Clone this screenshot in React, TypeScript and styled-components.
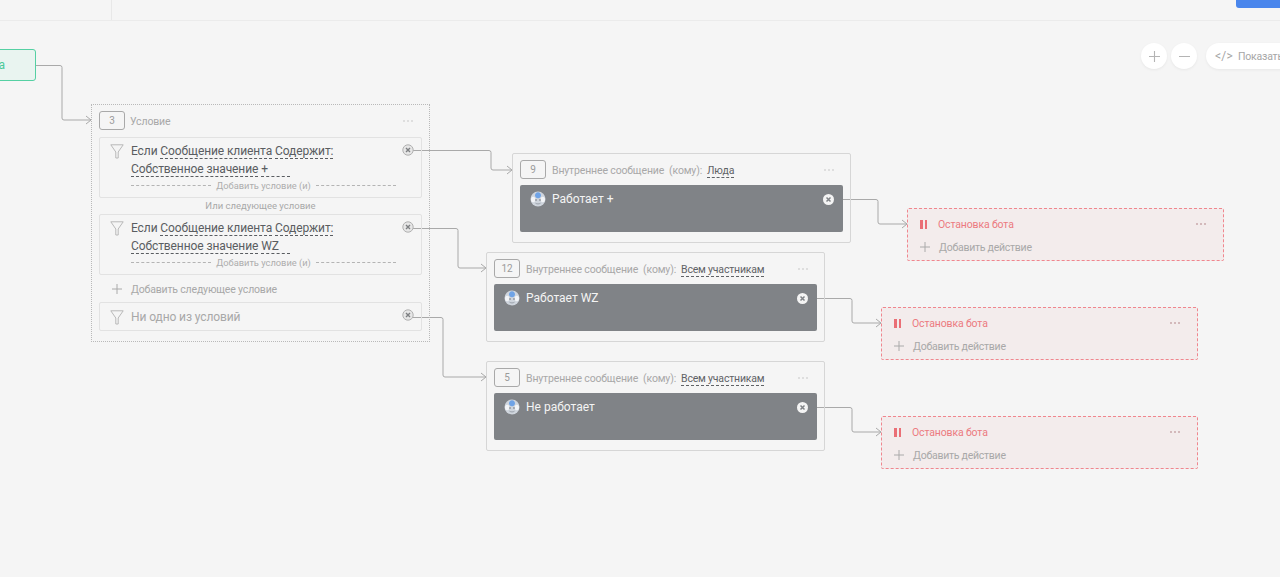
import React from "react";
import styled, { createGlobalStyle } from "styled-components";

const GlobalStyle = createGlobalStyle`
  html, body {
    margin: 0;
    padding: 0;
    height: 100%;
    background: #f5f5f5;
    overflow: hidden;
  }
  body {
    font-family: Roboto, "Liberation Sans", sans-serif;
  }
`;

const Page = styled.div`
  width: 1280px;
  height: 577px;
  display: flex;
  flex-direction: column;
  background: #f5f5f5;
  overflow: hidden;
`;

const TopBar = styled.header`
  flex: none;
  height: 20px;
  display: flex;
  justify-content: space-between;
  align-items: flex-start;
  border-bottom: 1px solid #ebebeb;
`;

const TopSection = styled.div`
  width: 111px;
  height: 20px;
  border-right: 1px solid #e8e8e8;
`;

const PrimaryButton = styled.div`
  width: 44px;
  height: 8px;
  background: #4a86ec;
  border-radius: 0 0 0 3px;
`;

const Canvas = styled.main`
  position: relative;
  flex: 1;
`;

const Wires = styled.svg`
  position: absolute;
  left: 0;
  top: -21px;
  width: 1280px;
  height: 577px;
  pointer-events: none;
`;

const ZoomControls = styled.div`
  position: absolute;
  left: 1141px;
  top: 22px;
  display: flex;
  align-items: center;
  gap: 4px;
`;

const RoundButton = styled.div`
  width: 26px;
  height: 26px;
  border-radius: 50%;
  background: #fff;
  box-shadow: 0 1px 3px rgba(0, 0, 0, 0.06);
  display: flex;
  align-items: center;
  justify-content: center;
  color: #b4b4b4;
`;

const CodePill = styled.div`
  margin-left: 5px;
  width: 100px;
  height: 26px;
  border-radius: 13px;
  background: #fff;
  box-shadow: 0 1px 3px rgba(0, 0, 0, 0.06);
  display: flex;
  align-items: center;
  gap: 5px;
  padding-left: 9px;
  font-size: 10.5px;
  letter-spacing: -0.2px;
  color: #a6a6a6;
  white-space: nowrap;
`;

const CodeGlyph = styled.span`
  font-size: 12px;
  letter-spacing: 0.2px;
`;

const Node = styled.section<{ $x: number; $y: number; $w: number; $h: number }>`
  position: absolute;
  left: ${(p) => p.$x}px;
  top: ${(p) => p.$y - 21}px;
  width: ${(p) => p.$w}px;
  height: ${(p) => p.$h}px;
  box-sizing: border-box;
`;

const StartNode = styled(Node)`
  border: 1px solid #55d0a3;
  border-radius: 3px;
  background: #e9f4f0;
  color: #4cc99a;
  font-size: 12px;
  display: flex;
  align-items: center;
  justify-content: flex-end;
  padding-right: 30px;
`;

const ConditionNode = styled(Node)`
  border: 1px dotted #b9b9b9;
  padding: 6px 7px;
  display: flex;
  flex-direction: column;
`;

const MessageNode = styled(Node)`
  border: 1px solid #d6d6d6;
  border-radius: 2px;
  padding: 6px 7px;
  display: flex;
  flex-direction: column;
`;

const StopNode = styled(Node)`
  border: 1px dashed #f0868e;
  border-radius: 2px;
  background: #f3ecec;
  padding: 8px 14px 0 12px;
  display: flex;
  flex-direction: column;
  gap: 9px;
`;

const NodeHead = styled.div`
  height: 19px;
  flex: none;
  display: flex;
  align-items: center;
  font-size: 10.5px;
  letter-spacing: -0.15px;
  color: #a8a8a8;
  white-space: nowrap;
`;

const HeadLabel = styled.span`
  margin-top: 2px;
`;

const Badge = styled.div<{ $gap?: number }>`
  box-sizing: border-box;
  flex: none;
  width: 26px;
  height: 19px;
  margin-right: ${(p) => p.$gap ?? 5}px;
  border: 1px solid #a9a9a9;
  border-radius: 3px;
  display: flex;
  align-items: center;
  justify-content: center;
  font-size: 10px;
  color: #9b9b9b;
`;

const Recipient = styled.span`
  margin-left: 5px;
  margin-top: 2px;
  color: #5f6266;
  letter-spacing: -0.2px;
  border-bottom: 1px dashed #5f6266;
  line-height: 13px;
`;

const MoreDots = styled.span<{ $color?: string; $inset?: number }>`
  margin-left: auto;
  margin-right: ${(p) => p.$inset ?? 9}px;
  display: flex;
  gap: 2px;
  i {
    width: 2px;
    height: 2px;
    border-radius: 50%;
    background: ${(p) => p.$color ?? "#d6d6d6"};
  }
`;

const HeadGap = styled.div`
  height: 7px;
  flex: none;
`;

const CaseCard = styled.div<{ $h: number; $top?: number }>`
  position: relative;
  box-sizing: border-box;
  height: ${(p) => p.$h}px;
  flex: none;
  border: 1px solid #e2e2e2;
  border-radius: 2px;
  display: flex;
  padding: ${(p) => p.$top ?? 6}px 25px 0 10px;
  gap: 7px;
`;

const CaseBody = styled.div`
  flex: 1;
  display: flex;
  flex-direction: column;
`;

const CaseLine = styled.div<{ $muted?: boolean }>`
  height: 18px;
  line-height: 15px;
  font-size: 12px;
  letter-spacing: -0.1px;
  color: ${(p) => (p.$muted ? "#a8a8a8" : "#5a5d61")};
  white-space: nowrap;
`;

const Term = styled.span<{ $minWidth?: number }>`
  display: inline-block;
  line-height: 13px;
  min-width: ${(p) => p.$minWidth ?? 0}px;
  border-bottom: 1px dashed #5a5d61;
`;

const AddCondition = styled.div`
  display: flex;
  align-items: center;
  gap: 5px;
  height: 14px;
  margin-top: -2px;
  font-size: 9.3px;
  color: #adadad;
  white-space: nowrap;
  &::before,
  &::after {
    content: "";
    flex: 1;
    border-top: 1px dashed #b4b4b4;
  }
`;

const OrLabel = styled.div`
  flex: none;
  height: 16px;
  line-height: 15px;
  text-align: center;
  font-size: 9.5px;
  color: #a8a8a8;
`;

const AddRow = styled.div`
  flex: none;
  height: 27px;
  display: flex;
  align-items: center;
  gap: 9px;
  padding-left: 13px;
  padding-top: 1px;
  box-sizing: border-box;
  font-size: 10.5px;
  letter-spacing: -0.17px;
  color: #a8a8a8;
`;

const CloseSpot = styled.span`
  position: absolute;
  right: 7px;
  top: 6px;
  display: flex;
`;

const MessageBox = styled.div`
  flex: none;
  box-sizing: border-box;
  margin-top: 6px;
  height: 47px;
  background: #808387;
  border-radius: 2px;
  display: flex;
  align-items: flex-start;
  gap: 6px;
  padding: 6px 9px 0 10px;
  font-size: 12px;
  line-height: 16px;
  color: #f4f4f4;
`;

const RemoveSpot = styled.span`
  margin-left: auto;
  margin-top: 3px;
  display: flex;
`;

const StopRow = styled.div`
  display: flex;
  align-items: center;
  height: 14px;
  gap: 11px;
  font-size: 10.5px;
  letter-spacing: -0.15px;
  color: #ec7a80;
`;

const StopAdd = styled.div`
  display: flex;
  align-items: center;
  height: 14px;
  gap: 9px;
  font-size: 10.5px;
  letter-spacing: -0.25px;
  color: #a8a8a8;
`;

const Pause = styled.span`
  width: 7px;
  height: 9px;
  display: flex;
  justify-content: space-between;
  &::before,
  &::after {
    content: "";
    width: 2.5px;
    background: #ea6f76;
  }
`;

const FunnelIcon = () => (
  <svg width="14" height="15" viewBox="0 0 14 15" fill="none" stroke="#b8b8b8" strokeWidth="1" style={{ flex: "none" }}>
    <path d="M.8.8h12.4L8.2 8v6H5.800V8z" />
  </svg>
);

const PlusIcon = ({ size = 10, color = "#aaa" }: { size?: number; color?: string }) => (
  <svg width={size} height={size} viewBox="0 0 10 10" stroke={color} strokeWidth="1" style={{ flex: "none" }}>
    <path d="M5 0v10M0 5h10" />
  </svg>
);

const CaseClose = () => (
  <svg width="12" height="12" viewBox="0 0 12 12" fill="none">
    <circle cx="6" cy="6" r="5.2" fill="#e6e6e6" stroke="#b0b0b0" />
    <path d="M4 4l4 4M8 4l-4 4" stroke="#7d7f82" strokeWidth="1.4" />
  </svg>
);

const WhiteClose = () => (
  <svg width="11" height="11" viewBox="0 0 11 11">
    <circle cx="5.5" cy="5.5" r="5.5" fill="#f4f4f4" />
    <path d="M3.500 3.500l4 4M7.500 3.500l-4 4" stroke="#808387" strokeWidth="1.5" />
  </svg>
);

const BotAvatar = () => (
  <svg width="16" height="16" viewBox="0 0 16 16" style={{ flex: "none" }}>
    <circle cx="8" cy="8" r="7.500" fill="#cfd5dd" />
    <ellipse cx="3.200" cy="8.500" rx="2.200" ry="2.800" fill="#f2f4f7" />
    <ellipse cx="12.800" cy="8.500" rx="2.200" ry="2.800" fill="#f2f4f7" />
    <path d="M8 1.200c1.800 0 3 1.500 3 3.300 0 1.500-1.300 2.700-3 2.700S5 6 5 4.500c0-1.800 1.200-3.300 3-3.300z" fill="#6fa3e6" />
    <circle cx="6" cy="9" r=".8" fill="#6b7078" />
    <circle cx="10" cy="9" r=".8" fill="#6b7078" />
    <path d="M5.500 12.200c1.700 1 3.300 1 5 0" stroke="#9aa1ab" fill="none" />
  </svg>
);

const wirePaths = [
  "M36 65.500H60a2 2 0 0 1 2 2V118a2 2 0 0 0 2 2H91",
  "M413 150.500H489a2 2 0 0 1 2 2V168a2 2 0 0 0 2 2H512",
  "M413 228.500H456a2 2 0 0 1 2 2V266a2 2 0 0 0 2 2H486",
  "M413 317.500H441a2 2 0 0 1 2 2V375a2 2 0 0 0 2 2H486",
  "M833 199.500H876a2 2 0 0 1 2 2V222a2 2 0 0 0 2 2H907",
  "M807 298.500H850a2 2 0 0 1 2 2V321a2 2 0 0 0 2 2H881",
  "M807 407.500H850a2 2 0 0 1 2 2V430a2 2 0 0 0 2 2H881",
];

const arrowHeads = [
  [91, 120],
  [512, 170],
  [486, 268],
  [486, 377],
  [907, 224],
  [881, 323],
  [881, 432],
];

const messages = [
  { id: 9, x: 512, y: 153, to: "Люда", text: "Работает +" },
  { id: 12, x: 486, y: 252, to: "Всем участникам", text: "Работает WZ" },
  { id: 5, x: 486, y: 361, to: "Всем участникам", text: "Не работает" },
];

const stops = [
  { x: 907, y: 208 },
  { x: 881, y: 307 },
  { x: 881, y: 416 },
];

const Dots = ({ color, inset }: { color?: string; inset?: number }) => (
  <MoreDots $color={color} $inset={inset}>
    <i />
    <i />
    <i />
  </MoreDots>
);

const ConditionCase = ({ value, minWidth }: { value: string; minWidth: number }) => (
  <CaseCard $h={61}>
    <FunnelIcon />
    <CaseBody>
      <CaseLine>
        Если <Term>Сообщение клиента</Term> <Term>Содержит:</Term>
      </CaseLine>
      <CaseLine>
        <Term>Собственное значение</Term> <Term $minWidth={minWidth}>{value}</Term>
      </CaseLine>
      <AddCondition>Добавить условие (и)</AddCondition>
    </CaseBody>
    <CloseSpot>
      <CaseClose />
    </CloseSpot>
  </CaseCard>
);

export default function App() {
  return (
    <Page>
      <GlobalStyle />
      <TopBar>
        <TopSection />
        <PrimaryButton />
      </TopBar>
      <Canvas>
        <Wires viewBox="0 0 1280 577" fill="none">
          {wirePaths.map((d) => (
            <path key={d} d={d} stroke="#a9a9a9" strokeWidth="1" />
          ))}
          {arrowHeads.map(([x, y]) => (
            <path key={x + "-" + y} d={`M${x - 5} ${y - 4}L${x} ${y}L${x - 5} ${y + 4}`} stroke="#a9a9a9" strokeWidth="1" />
          ))}
        </Wires>

        <ZoomControls>
          <RoundButton>
            <PlusIcon size={11} color="#b4b4b4" />
          </RoundButton>
          <RoundButton>
            <svg width="11" height="1" viewBox="0 0 11 1" stroke="#b4b4b4">
              <path d="M0 .5h11" />
            </svg>
          </RoundButton>
          <CodePill>
            <CodeGlyph>&lt;/&gt;</CodeGlyph>
            <span>Показать код</span>
          </CodePill>
        </ZoomControls>

        <StartNode $x={-40} $y={49} $w={76} $h={32}>
          а
        </StartNode>

        <ConditionNode $x={91} $y={104} $w={339} $h={238}>
          <NodeHead>
            <Badge>3</Badge>
            <HeadLabel>Условие</HeadLabel>
            <Dots />
          </NodeHead>
          <HeadGap />
          <ConditionCase value="+" minWidth={29} />
          <OrLabel>Или следующее условие</OrLabel>
          <ConditionCase value="WZ" minWidth={29} />
          <AddRow>
            <PlusIcon />
            Добавить следующее условие
          </AddRow>
          <CaseCard $h={29} $top={7}>
            <FunnelIcon />
            <CaseBody>
              <CaseLine $muted>Ни одно из условий</CaseLine>
            </CaseBody>
            <CloseSpot>
              <CaseClose />
            </CloseSpot>
          </CaseCard>
        </ConditionNode>

        {messages.map((m) => (
          <MessageNode key={m.id} $x={m.x} $y={m.y} $w={339} $h={90}>
            <NodeHead>
              <Badge $gap={6}>{m.id}</Badge>
              <HeadLabel>Внутреннее сообщение &nbsp;(кому):</HeadLabel>
              <Recipient>{m.to}</Recipient>
              <Dots />
            </NodeHead>
            <MessageBox>
              <BotAvatar />
              {m.text}
              <RemoveSpot>
                <WhiteClose />
              </RemoveSpot>
            </MessageBox>
          </MessageNode>
        ))}

        {stops.map((s) => (
          <StopNode key={s.y} $x={s.x} $y={s.y} $w={317} $h={53}>
            <StopRow>
              <Pause />
              Остановка бота
              <Dots color="#c9a9ab" inset={3} />
            </StopRow>
            <StopAdd>
              <PlusIcon />
              Добавить действие
            </StopAdd>
          </StopNode>
        ))}
      </Canvas>
    </Page>
  );
}
